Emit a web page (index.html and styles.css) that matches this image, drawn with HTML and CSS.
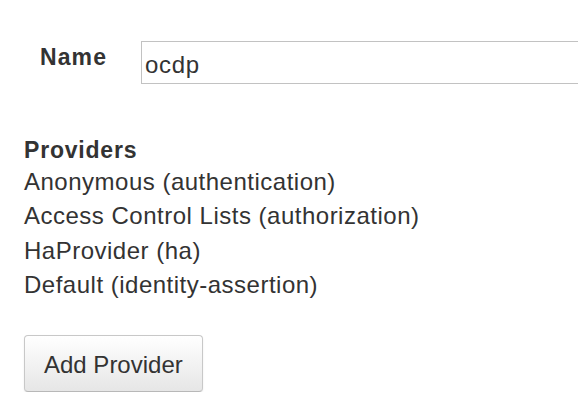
FILE: index.html
```html
<!DOCTYPE html>
<html>
<head>
<meta charset="utf-8">
<link rel="stylesheet" href="styles.css">
</head>
<body>
<div class="page">
  <div class="name-row">
    <label class="name-label" for="name">Name</label>
    <input id="name" class="name-input" type="text" value="ocdp">
  </div>
  <div class="providers">
    <div class="providers-title">Providers</div>
    <ul class="provider-list">
      <li>Anonymous (authentication)</li>
      <li>Access Control Lists (authorization)</li>
      <li>HaProvider (ha)</li>
      <li>Default (identity-assertion)</li>
    </ul>
  </div>
  <button class="add-btn" type="button">Add Provider</button>
</div>
</body>
</html>
```
FILE: styles.css
```css
html, body {
  margin: 0;
  padding: 0;
  background: #fff;
  overflow: hidden;
}
body {
  font-family: "Liberation Sans", Arial, Helvetica, sans-serif;
  color: #333;
}
.page {
  padding: 41px 0 0 24px;
}
.name-row {
  display: flex;
  align-items: flex-start;
  padding-left: 16px;
}
.name-label {
  width: 101px;
  flex: none;
  font-weight: bold;
  font-size: 23px;
  line-height: 26px;
  letter-spacing: 1.1px;
  margin-top: 3px;
}
.name-input {
  flex: none;
  box-sizing: border-box;
  width: 437px;
  height: 43px;
  margin: 0;
  padding: 5px 3px 0;
  border: 1px solid #c2c2c2;
  border-right: none;
  border-radius: 0;
  font-family: "Liberation Sans", Arial, Helvetica, sans-serif;
  font-size: 24px;
  letter-spacing: 0.7px;
  color: #333;
  outline: none;
  background: #fff;
}
.providers {
  margin-top: 52px;
}
.providers-title {
  font-weight: bold;
  font-size: 23px;
  line-height: 28px;
  letter-spacing: 0.8px;
}
.provider-list {
  list-style: none;
  margin: 1px 0 0;
  padding: 0;
  font-size: 24px;
  line-height: 34.3px;
  letter-spacing: 0.5px;
}
.add-btn {
  display: block;
  box-sizing: border-box;
  margin-top: 33px;
  height: 57px;
  padding: 3px 19px 0;
  font-family: "Liberation Sans", Arial, Helvetica, sans-serif;
  font-size: 24px;
  color: #333;
  background: linear-gradient(#ffffff, #e6e6e6);
  border: 1px solid #c8c8c8;
  border-bottom-color: #b8b8b8;
  border-radius: 4px;
  box-shadow: 0 1px 2px rgba(0,0,0,0.08);
}
```
